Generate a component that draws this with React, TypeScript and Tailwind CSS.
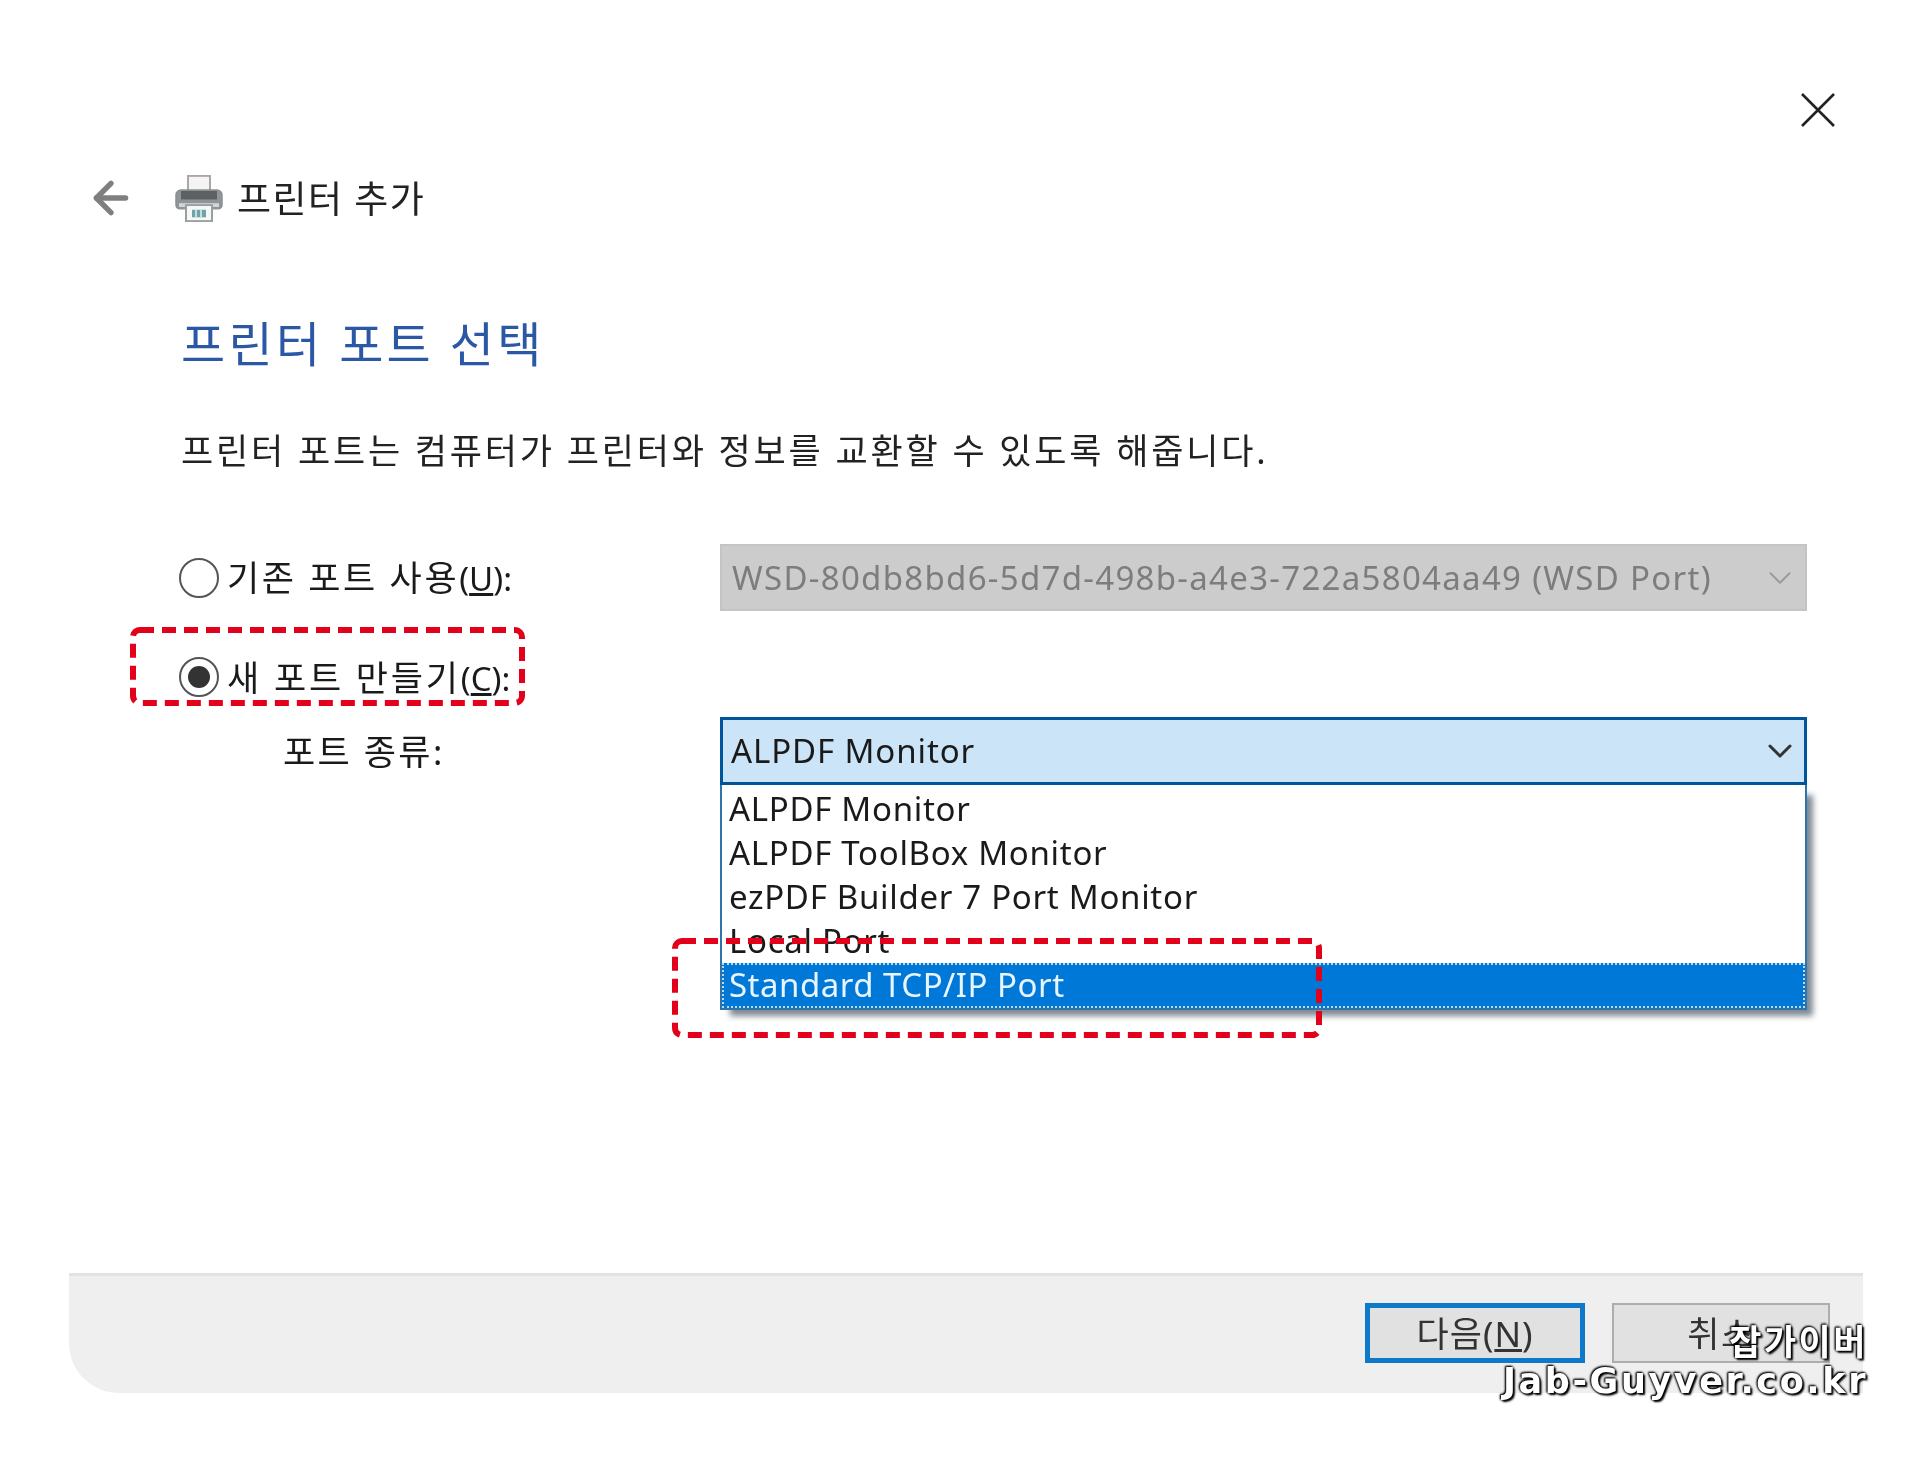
import { ArrowLeft, ChevronDown } from 'lucide-react';

const ports = ['ALPDF Monitor', 'ALPDF ToolBox Monitor', 'ezPDF Builder 7 Port Monitor', 'Local Port'];

function PrinterIcon() {
  return (
    <svg width="48" height="47" viewBox="0 0 48 50" preserveAspectRatio="none" className="shrink-0">
      <rect x="13" y="1" width="22" height="16" fill="#f4f4f4" stroke="#a8a8a8" strokeWidth="2" />
      <path d="M6 16h36a5 5 0 0 1 5 5v11a4 4 0 0 1-4 4H5a4 4 0 0 1-4-4V21a5 5 0 0 1 5-5z" fill="#8f9496" stroke="#8a9092" strokeWidth="1.5" />
      <rect x="6" y="17" width="36" height="9" fill="#5d6163" />
      <rect x="4" y="30" width="40" height="4" fill="#d3d6d8" />
      <rect x="11" y="32" width="26" height="17" fill="#f6f8f8" stroke="#9aa0a2" strokeWidth="2" />
      <rect x="17" y="37" width="14" height="8" fill="#6fa5aa" />
      <path d="M21 37v8M26 37v8" stroke="#e6f0f0" strokeWidth="1.5" />
    </svg>
  );
}

function Radio({ checked }: { checked?: boolean }) {
  return (
    <span className="w-[40px] h-[40px] shrink-0 rounded-full border-2 border-[#555555] flex items-center justify-center bg-white">
      {checked && <span className="w-[22px] h-[22px] rounded-full bg-[#333333]" />}
    </span>
  );
}

function RedBox({ className, width, height }: { className: string; width: number; height: number }) {
  return (
    <svg className={className} width={width} height={height} viewBox={`0 0 ${width} ${height}`} fill="none">
      <rect
        x="3"
        y="3"
        width={width - 6}
        height={height - 6}
        rx="7"
        stroke="#e2001a"
        strokeWidth="6"
        strokeDasharray="14 8"
      />
    </svg>
  );
}

export default function App() {
  return (
    <div className="relative w-[1932px] h-[1462px] overflow-hidden bg-white flex flex-col px-[69px] pb-[69px] text-[#1a1a1a] blur-[0.6px] font-['Noto_Sans','Noto_Sans_CJK_KR',sans-serif]">
      <div className="flex justify-end pt-[93px] pr-[28px]">
        <svg width="34" height="34" viewBox="0 0 34 34" className="text-[#222222]">
          <path d="M1 1l32 32M33 1L1 33" stroke="currentColor" strokeWidth="2.6" />
        </svg>
      </div>

      <div className="flex items-center h-[50px] mt-[46px]">
        <ArrowLeft size={50} strokeWidth={2.6} className="ml-[17px] text-[#7f7f7f]" />
        <div className="ml-[39px]"><PrinterIcon /></div>
        <span className="ml-[14px] text-[37px] leading-none tracking-[1.4px] text-[#222222]">프린터 추가</span>
      </div>

      <h1 className="mt-[91px] ml-[112px] h-[60px] flex items-center text-[48px] leading-none font-normal text-[#2b58a4] tracking-[3.3px]">
        프린터 포트 선택
      </h1>

      <p className="mt-[54px] ml-[112px] h-[44px] flex items-center text-[35px] leading-none tracking-[2.8px] text-[#222222]">
        프린터 포트는 컴퓨터가 프린터와 정보를 교환할 수 있도록 해줍니다.
      </p>

      <div className="mt-[72px] flex items-center h-[67px]">
        <label className="w-[651px] pl-[110px] flex items-center gap-[8px] text-[35px] leading-none">
          <Radio />
          <span><span className="tracking-[2.6px]">기존 포트 사용</span><span className="text-[33px]">(<u>U</u>):</span></span>
        </label>
        <div className="w-[1087px] h-[67px] bg-[#cccccc] border-2 border-[#c4c4c4] flex items-center justify-between pl-[10px] pr-[6px] text-[33px] text-[#7d7d7d]">
          <span className="tracking-[1.3px]">WSD-80db8bd6-5d7d-498b-a4e3-722a5804aa49 (WSD Port)</span>
          <ChevronDown size={38} strokeWidth={1.2} className="text-[#9a9a9a]" />
        </div>
      </div>

      <label className="mt-[46px] h-[40px] pl-[110px] flex items-center gap-[8px] text-[35px] leading-none">
        <Radio checked />
        <span><span className="tracking-[2.8px]">새 포트 만들기</span><span className="text-[33px]">(<u>C</u>):</span></span>
      </label>

      <div className="mt-[20px] flex items-center h-[68px]">
        <div className="w-[651px] pl-[214px] text-[35px] leading-none tracking-[2.4px]">포트 종류:</div>
        <div className="relative w-[1087px] h-[68px] bg-[#cce4f7] border-[3px] border-[#005499] flex items-center justify-between pl-[8px] pr-[4px] text-[33px]">
          <span className="tracking-[0.9px]">ALPDF Monitor</span>
          <ChevronDown size={40} strokeWidth={1.8} className="text-[#333333]" />
          <div className="absolute left-[-3px] top-[calc(100%+3px)] w-[1087px] pt-[2px] border-2 border-t-0 border-[#2f74a8] bg-white shadow-[8px_8px_6px_-2px_#7f8a94] text-[33px] tracking-[0.7px]">
            {ports.map((port) => (
              <div key={port} className="h-[44px] pl-[7px] flex items-center text-[#1a1a1a]">{port}</div>
            ))}
            <div className="h-[45px] pl-[5px] pb-[2px] flex items-center bg-[#0078d7] text-[#e8f4ff] border-2 border-dotted border-[#bcd8f0] tracking-[0.5px]">
              Standard TCP/IP Port
            </div>
          </div>
        </div>
      </div>

      <div className="mt-auto h-[120px] bg-[#efefef] border-t-[3px] border-[#e2e2e2] rounded-bl-[50px] flex justify-end gap-[27px] pt-[27px] pr-[33px]">
        <button className="w-[220px] h-[60px] bg-[#e1e1e1] border-[5px] border-[#0f79c9] text-[35px] leading-none text-[#333333] tracking-[1px]">
          다음(<u>N</u>)
        </button>
        <button className="w-[218px] h-[60px] bg-[#e1e1e1] border-2 border-[#adadad] text-[35px] leading-none text-[#333333] tracking-[1.5px]">
          취소
        </button>
      </div>

      {/* annotations over the dialog */}
      <RedBox className="absolute left-[130px] top-[627px]" width={395} height={79} />
      <RedBox className="absolute left-[672px] top-[938px]" width={650} height={100} />

      <div className="absolute right-[64px] top-[1326px] flex flex-col items-end text-white font-['DejaVu_Sans','Noto_Sans_CJK_KR',sans-serif] font-normal leading-none [text-shadow:0_0_2px_#000,0_0_3px_#000,2px_2px_2px_#000,-1px_-1px_2px_#000]">
        <span className="text-[35px] h-[38px] tracking-[2.5px] font-bold">잡가이버</span>
        <span className="text-[35px] tracking-[2.6px] font-semibold">Jab-Guyver.co.kr</span>
      </div>
    </div>
  );
}
